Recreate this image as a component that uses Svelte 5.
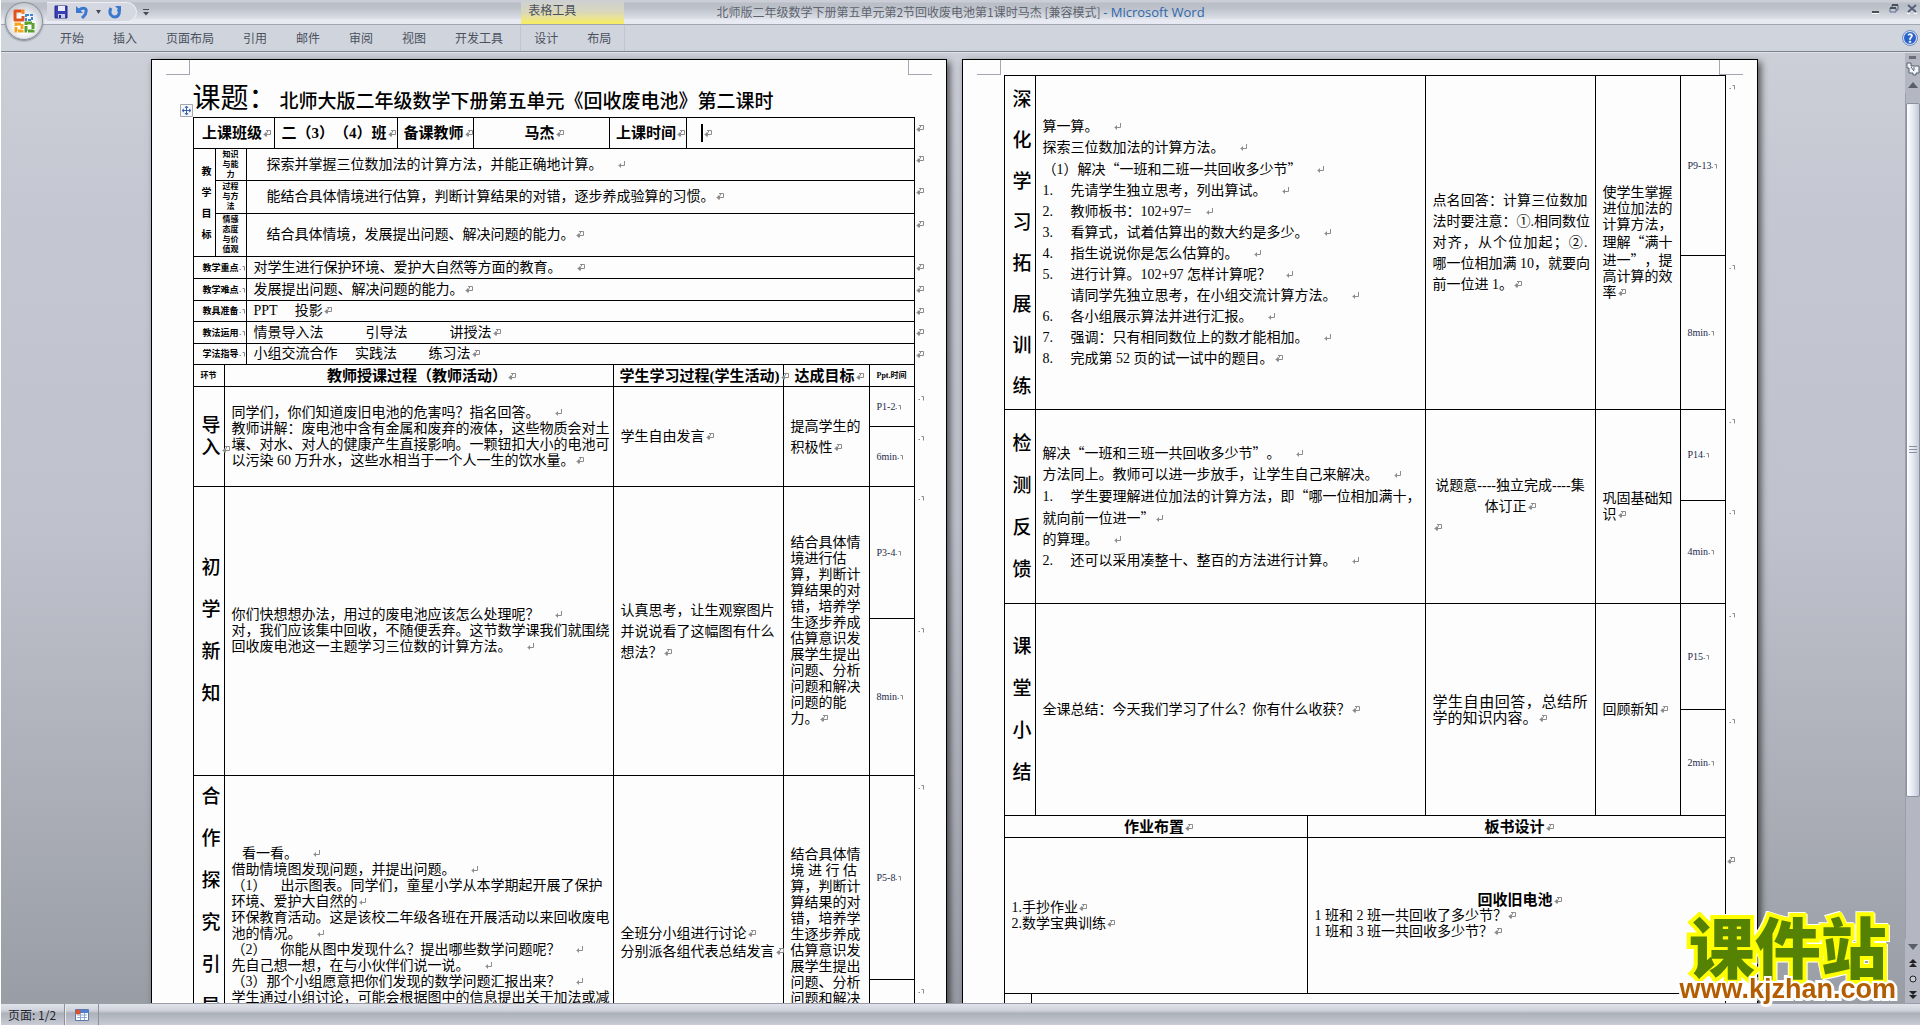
<script>
	const tabs = ['开始', '插入', '页面布局', '引用', '邮件', '审阅', '视图', '开发工具'];
	const tableTabs = ['设计', '布局'];

	// ↵ line break, ¶ paragraph end, ~ small paragraph end
	const goals = [
		{ name: ['知识', '与能', '力'], text: '探索并掌握三位数加法的计算方法，并能正确地计算。　↵', size: 'h32' },
		{ name: ['过程', '与方', '法'], text: '能结合具体情境进行估算，判断计算结果的对错，逐步养成验算的习惯。¶', size: 'h33' },
		{ name: ['情感', '态度', '与价', '值观'], text: '结合具体情境，发展提出问题、解决问题的能力。¶', size: 'h43' }
	];

	const notes = [
		{ name: '教学重点', text: '对学生进行保护环境、爱护大自然等方面的教育。　¶' },
		{ name: '教学难点', text: '发展提出问题、解决问题的能力。¶' },
		{ name: '教具准备', text: 'PPT　 投影¶' },
		{ name: '教法运用', text: '情景导入法　　　引导法　　　讲授法¶' },
		{ name: '学法指导', text: '小组交流合作　 实践法　　 练习法¶' }
	];

	const aims = ['结合具体情', '境进行估', '算，判断计', '算结果的对', '错，培养学', '生逐步养成', '估算意识发', '展学生提出', '问题、分析', '问题和解决', '问题的能', '力。¶'];

	const firstPage = [
		{
			stage: ['导', '入¶'],
			stageKind: 'short',
			teach: [
				'同学们，你们知道废旧电池的危害吗？指名回答。　↵',
				'教师讲解：废电池中含有金属和废弃的液体，这些物质会对土',
				'壤、对水、对人的健康产生直接影响。一颗钮扣大小的电池可',
				'以污染 60 万升水，这些水相当于一个人一生的饮水量。¶'
			],
			learn: ['学生自由发言¶'],
			aim: ['提高学生的', '积极性¶'],
			aimKind: 'loose',
			slides: 'P1-2',
			time: '6min',
			heights: [40, 60]
		},
		{
			stage: ['初', '学', '新', '知'],
			teach: [
				'你们快想想办法，用过的废电池应该怎么处理呢？　↵',
				'对，我们应该集中回收，不随便丢弃。这节数学课我们就围绕',
				'回收废电池这一主题学习三位数的计算方法。　↵'
			],
			learn: ['认真思考，让生观察图片', '并说说看了这幅图有什么', '想法？¶'],
			aim: aims,
			slides: 'P3-4',
			time: '8min',
			heights: [132, 157]
		},
		{
			stage: ['合', '作', '探', '究', '引', '导'],
			stageKind: 'top',
			teach: [
				'   看一看。　↵',
				'借助情境图发现问题，并提出问题。　↵',
				'（1）　出示图表。同学们，童星小学从本学期起开展了保护',
				'环境、爱护大自然的↵',
				'环保教育活动。这是该校二年级各班在开展活动以来回收废电',
				'池的情况。　↵',
				'（2）　你能从图中发现什么？提出哪些数学问题呢？　↵',
				'先自己想一想，在与小伙伴们说一说。　↵',
				'（3）那个小组愿意把你们发现的数学问题汇报出来？　↵',
				'学生通过小组讨论，可能会根据图中的信息提出关于加法或减'
			],
			teachKind: 'lowered',
			learn: ['全班分小组进行讨论¶', '分别派各组代表总结发言¶'],
			learnKind: 'medium',
			aim: [aims[0], '境 进 行 估', ...aims.slice(2)],
			slides: 'P5-8',
			time: '',
			heights: [204, 130]
		}
	];

	const secondPage = [
		{
			stage: ['深', '化', '学', '习', '拓', '展', '训', '练'],
			stageKind: 'long',
			teach: [
				'算一算。　↵',
				'探索三位数加法的计算方法。　↵',
				'（1）解决“一班和二班一共回收多少节”　↵',
				'1.|先请学生独立思考，列出算试。　↵',
				'2.|教师板书：102+97=　↵',
				'3.|看算式，试着估算出的数大约是多少。　↵',
				'4.|指生说说你是怎么估算的。　↵',
				'5.|进行计算。102+97 怎样计算呢？　↵',
				' |请同学先独立思考，在小组交流计算方法。　↵',
				'6.|各小组展示算法并进行汇报。　↵',
				'7.|强调：只有相同数位上的数才能相加。　↵',
				'8.|完成第 52 页的试一试中的题目。¶'
			],
			teachKind: 'loose',
			learn: ['点名回答：计算三位数加', '法时要注意：①.相同数位', '对齐，从个位加起；②.', '哪一位相加满 10，就要向', '前一位进 1。¶'],
			learnKind: 'loose justified',
			aim: ['使学生掌握', '进位加法的', '计算方法，', '理解“满十', '进一”，提', '高计算的效', '率¶'],
			slides: 'P9-13',
			time: '8min',
			heights: [180, 154]
		},
		{
			stage: ['检', '测', '反', '馈'],
			teach: [
				'解决“一班和三班一共回收多少节”。　↵',
				'方法同上。教师可以进一步放手，让学生自己来解决。　↵',
				'1.|学生要理解进位加法的计算方法，即“哪一位相加满十，',
				'就向前一位进一”↵',
				'的算理。　↵',
				'2.|还可以采用凑整十、整百的方法进行计算。　↵'
			],
			teachKind: 'loose',
			learn: ['说题意----独立完成----集', '体订正¶', '¶'],
			learnKind: 'loose centered',
			aim: ['巩固基础知', '识¶'],
			slides: 'P14',
			time: '4min',
			heights: [91, 103]
		},
		{
			stage: ['课', '堂', '小', '结'],
			teach: ['全课总结：今天我们学习了什么？你有什么收获？¶'],
			learn: ['学生自由回答，总结所', '学的知识内容。¶'],
			learnKind: 'large justified',
			aim: ['回顾新知¶'],
			slides: 'P15',
			time: '2min',
			heights: [106, 106]
		}
	];
</script>

{#snippet mark(kind)}<svg class="mark" class:mini={kind === '~'} viewBox="0 0 9 9" aria-hidden="true">{#if kind === '¶'}<path d="M4 1.5h4.500v4H1.500M4.500 3.500v4M3.500 3.500v4M2.500 4.500v2M5.500 1.500v2" />{:else if kind === '↵'}<path d="M7.500 1v4.500H1.500M3.500 3.500v4M2.500 4.500v2" />{:else}<path d="M.5 7.500h1.500M3.500 4.500h2v4" />{/if}</svg>{/snippet}

{#snippet rich(text)}{#each text.split(/([“”↵¶~])/) as part}{#if part === '“' || part === '”'}<span class="quote">{part}</span>{:else if '↵¶~'.includes(part) && part}{@render mark(part)}{:else}{part}{/if}{/each}{/snippet}

{#snippet lines(list)}
	{#each list as line}
		{#if line.includes('|')}
			<p><span class="num">{line.split('|')[0]}</span>{@render rich(line.split('|')[1])}</p>
		{:else}
			<p>{@render rich(line)}</p>
		{/if}
	{/each}
{/snippet}

{#snippet rowEnd(kind)}<span class="row-end">{@render mark(kind)}</span>{/snippet}

{#snippet section(row)}
	<tr style="height: {row.heights[0]}px">
		<th class="stage {row.stageKind ?? ''}" rowspan="2">{@render lines(row.stage)}</th>
		<td class={row.teachKind ?? ''} rowspan="2">{@render lines(row.teach)}</td>
		<td class={row.learnKind ?? 'loose'} rowspan="2">{@render lines(row.learn)}</td>
		<td class={row.aimKind ?? ''} rowspan="2">{@render lines(row.aim)}</td>
		<td class="slide">{row.slides}{@render mark('~')}{@render rowEnd('~')}</td>
	</tr>
	<tr style="height: {row.heights[1]}px">
		<td class="slide">{#if row.time}{row.time}{@render mark('~')}{/if}{@render rowEnd('~')}</td>
	</tr>
{/snippet}

<div class="word">
	<header class="titlebar">
		<div class="quick">
			<button aria-label="保存">
				<svg width="14" height="14" viewBox="0 0 14 14"><path d="M1 1h12v12H1z" fill="#3a3fb4" stroke="#24298a" /><path d="M4 1h7v5H4z" fill="#e8ecfa" /><path d="M4 9h7v4H4z" fill="#c6cbe6" /><path d="M5 10h2v3H5z" fill="#24298a" /></svg>
			</button>
			<button aria-label="撤消">
				<svg width="14" height="14" viewBox="0 0 14 14"><path d="M4 5c4-3 8-2 7 2 0 3-2 4-4 6" fill="none" stroke="#3b78cf" stroke-width="3" /><path d="M1 1v7h7z" fill="#3b78cf" /></svg>
			</button>
			<button class="drop" aria-label="撤消列表">
				<svg width="5" height="4" viewBox="0 0 5 4"><path d="M0 0h5L2.500 4z" fill="#454b58" /></svg>
			</button>
			<button aria-label="重复">
				<svg width="14" height="14" viewBox="0 0 14 14"><path d="M3 3c-3 6 1 9 4 9s6-4 3-8" fill="none" stroke="#3b78cf" stroke-width="3" /><path d="M7 1h6v6z" fill="#3b78cf" /></svg>
			</button>
		</div>
		<button class="custom" aria-label="自定义快速访问工具栏">
			<svg width="6" height="7" viewBox="0 0 6 7"><path d="M0 .5h6" stroke="#454b58" /><path d="M0 3h6L3 6.500z" fill="#454b58" /></svg>
		</button>
		<div class="caption">北师版二年级数学下册第五单元第2节回收废电池第1课时马杰 [兼容模式]  <span>- Microsoft Word</span></div>
		<div class="window">
			<button aria-label="最小化"><svg width="10" height="10" viewBox="0 0 10 10"><path d="M1 8h7" stroke="#4a4e58" stroke-width="2" /><path d="M1 9.500h7" stroke="#fff" /></svg></button>
			<button aria-label="还原"><svg width="10" height="10" viewBox="0 0 10 10"><path d="M3 3V1h6v5H7M1 4h6v4H1z" fill="none" stroke="#5f6f8c" /><path d="M3 1h6M1 4h6" stroke="#4a4e58" stroke-width="2" /></svg></button>
			<button aria-label="关闭"><svg width="10" height="10" viewBox="0 0 10 10"><path d="M1 1l8 7M9 1 1 8" stroke="#566079" stroke-width="2" /><path d="M0 9.500h3M7 9.500h3" stroke="#fff" /></svg></button>
		</div>
	</header>

	<button class="office" aria-label="Office 按钮">
		<svg width="24" height="26" viewBox="0 0 24 26" fill="none">
			<path d="M9 3H3v9h8V8" stroke="#e0541c" stroke-width="3" stroke-linejoin="round" />
			<path d="M9 3h2v3" stroke="#f08a2c" stroke-width="3" />
			<path d="M14 7h6v5h-6z" stroke="#3d86cf" stroke-width="2" stroke-dasharray="3 1" />
			<path d="M4 16h6v7H4z" stroke="#f4a51c" stroke-width="3" stroke-dasharray="5 1" />
			<path d="M14 15h7v8h-7z" stroke="#5aa02c" stroke-width="3" stroke-dasharray="6 1" />
		</svg>
	</button>

	<nav class="ribbon">
		{#each tabs as tab}
			<button>{tab}</button>
		{/each}
		<div class="context">
			<div class="context-label">表格工具</div>
			{#each tableTabs as tab}
				<button>{tab}</button>
			{/each}
		</div>
		<button class="help" aria-label="帮助">?</button>
	</nav>

	<div class="body">
		<main class="workspace">
			<article class="page">
				<i class="corner left"></i><i class="corner right"></i>
				<h1><span>课题：</span>北师大版二年级数学下册第五单元《回收废电池》第二课时</h1>
				<div class="plan">
					<svg class="handle" viewBox="0 0 13 13"><path d="M.5.5h12v12H.5z" fill="#f4f6fa" stroke="#a4a7ae" /><path d="M6.500 2v9M2 6.500h9M5 4l1.500-2L8 4M5 9l1.500 2L8 9M4 5 2 6.500 4 8M9 5l2 1.500L9 8" fill="none" stroke="#3c63b5" /></svg>
					<table>
						<colgroup><col class="w81" /><col class="w123" /><col class="w76" /><col class="w136" /><col class="w77" /><col /></colgroup>
						<tbody>
							<tr class="h31">
								<th>{@render rich('上课班级¶')}</th>
								<th>{@render rich('二（3）（4）班¶')}</th>
								<th>{@render rich('备课教师¶')}</th>
								<th>{@render rich('马杰¶')}</th>
								<th>{@render rich('上课时间¶')}</th>
								<td><div class="entry"><i class="caret"></i>{@render mark('¶')}</div>{@render rowEnd('¶')}</td>
							</tr>
						</tbody>
					</table>
					<table>
						<colgroup><col class="w22" /><col class="w31" /><col /></colgroup>
						<tbody>
							{#each goals as goal, i}
								<tr class={goal.size}>
									{#if i === 0}
										<th class="target" rowspan="3">{@render lines(['教', '学', '目', '标'])}</th>
									{/if}
									<th class="tiny">{@render lines(goal.name)}</th>
									<td class="goal"><p>{@render rich(goal.text)}</p>{@render rowEnd('¶')}</td>
								</tr>
							{/each}
							{#each notes as note, i}
								<tr class={i === 2 || i === 4 ? 'h21' : 'h22'}>
									<th class="note" colspan="2">{note.name}{@render mark('~')}</th>
									<td><p>{@render rich(note.text)}</p>{@render rowEnd('¶')}</td>
								</tr>
							{/each}
						</tbody>
					</table>
					<table>
						<colgroup><col class="w31" /><col /><col class="w170" /><col class="w86" /><col class="w45" /></colgroup>
						<thead>
							<tr class="h22">
								<th class="tiny">环节</th>
								<th>{@render rich('教师授课过程（教师活动）¶')}</th>
								<th>{@render rich('学生学习过程(学生活动)¶')}</th>
								<th>{@render rich('达成目标¶')}</th>
								<th class="tiny">Ppt.时间</th>
							</tr>
						</thead>
						<tbody>
							{#each firstPage as row}
								{@render section(row)}
							{/each}
						</tbody>
					</table>
				</div>
			</article>

			<article class="page second">
				<i class="corner left"></i><i class="corner right"></i>
				<div class="plan">
					<table>
						<colgroup><col class="w31" /><col /><col class="w170" /><col class="w85" /><col class="w45" /></colgroup>
						<tbody>
							{#each secondPage as row}
								{@render section(row)}
							{/each}
						</tbody>
					</table>
					<table>
						<colgroup><col class="w303" /><col /></colgroup>
						<tbody>
							<tr class="h22">
								<th>{@render rich('作业布置¶')}</th>
								<th>{@render rich('板书设计¶')}</th>
							</tr>
							<tr class="h156">
								<td>{@render lines(['1.手抄作业¶', '2.数学宝典训练¶'])}</td>
								<td><h2>{@render rich('回收旧电池¶')}</h2>{@render lines(['1 班和 2 班一共回收了多少节？¶', '1 班和 3 班一共回收多少节？¶'])}<span class="row-end low">{@render mark('¶')}</span></td>
							</tr>
						</tbody>
					</table>
					<table>
						<colgroup><col class="w27" /><col /></colgroup>
						<tbody><tr class="h156"><td></td><td></td></tr></tbody>
					</table>
				</div>
			</article>
		</main>

		<aside class="scroll">
			<div class="split"></div>
			<button aria-label="标尺"><svg width="14" height="14" viewBox="0 0 14 14"><path d="M1 1h4v3h8v7h-3v2H7v-2H3V6H1z" fill="#f2f5fa" stroke="#56606f" /><path d="M5 5l3 4M8 5v3" stroke="#56606f" /></svg></button>
			<button aria-label="向上"><svg width="10" height="6" viewBox="0 0 10 6"><path d="M0 6h10L5 0z" fill="#5a5e69" /></svg></button>
			<div class="track">
				<div class="thumb"><svg width="8" height="8" viewBox="0 0 8 8"><path d="M0 .5h8M0 3.500h8M0 6.500h8" stroke="#8a90a0" /></svg></div>
			</div>
			<button aria-label="向下"><svg width="10" height="6" viewBox="0 0 10 6"><path d="M0 0h10L5 6z" fill="#5a5e69" /></svg></button>
			<button aria-label="前一页"><svg width="8" height="8" viewBox="0 0 8 8"><path d="M0 4h8L4 0zM0 8h8L4 4z" fill="#222" /></svg></button>
			<button aria-label="选择浏览对象"><svg width="8" height="8" viewBox="0 0 8 8"><circle cx="4" cy="4" r="3" fill="#c9ccd4" stroke="#222" /></svg></button>
			<button aria-label="下一页"><svg width="8" height="8" viewBox="0 0 8 8"><path d="M0 0h8L4 4zM0 4h8L4 8z" fill="#222" /></svg></button>
		</aside>
	</div>

	<footer class="status">
		<button class="pages">页面: 1/2</button>
		<button class="macro" aria-label="录制宏">
			<svg width="16" height="14" viewBox="0 0 16 14"><path d="M1.500 1.500h13v11h-13z" fill="#fff" stroke="#5a78b0" /><path d="M2 2h12v3H2z" fill="#4f7fd0" /><path d="M3 7h10M3 9.500h10M6.500 5v7M10.500 5v7" stroke="#8fa8d4" /><circle cx="4" cy="4" r="2.500" fill="#d9532c" /></svg>
		</button>
	</footer>

	<div class="watermark">
		<strong>课件站</strong>
		<span>www.kjzhan.com</span>
	</div>
</div>

<style>
	:global(body) {
		margin: 0;
	}

	.word {
		height: 100vh;
		display: flex;
		flex-direction: column;
		position: relative;
		overflow: hidden;
		box-sizing: border-box;
		border-left: 1px solid #fff;
		font-family: 'Liberation Serif', 'Noto Sans CJK SC', serif;
		font-size: 14px;
		text-spacing-trim: space-all;
		color: #000;
	}

	button {
		padding: 0;
		border: 0;
		background: none;
		font: inherit;
		color: inherit;
	}

	svg {
		display: block;
	}

	p,
	h1,
	h2 {
		margin: 0;
	}

	.titlebar,
	.ribbon,
	.status {
		font-family: 'Noto Sans CJK SC', sans-serif;
		font-size: 12px;
		color: #4b515e;
	}

	.titlebar {
		height: 24px;
		display: flex;
		align-items: center;
		position: relative;
		padding-left: 46px;
		border-bottom: 1px solid #a2a5b2;
		background: linear-gradient(#cbced6 0, #cbced6 2px, #babec7 3px, #bcc0c9 8px, #cdd1d9 14px, #dadde4 18px, #e7eaf3 20px);
	}

	.quick {
		height: 20px;
		display: flex;
		align-items: center;
		gap: 7px;
		padding: 0 14px 0 7px;
		border: 1px solid #eceef3;
		border-left: 0;
		border-radius: 0 10px 10px 0;
		box-sizing: border-box;
		background: #d5d8e0;
	}

	.custom {
		margin-left: 6px;
	}

	.caption {
		position: absolute;
		left: 50%;
		top: 0;
		transform: translateX(-50%);
		line-height: 24px;
		white-space: pre;
		color: #5f646f;
	}

	.caption span {
		font-family: 'Open Sans', sans-serif;
		font-size: 13px;
		color: #2f67ab;
	}

	.window {
		display: flex;
		gap: 8px;
		margin-left: auto;
		padding: 0 3px 7px 0;
	}

	.office {
		position: absolute;
		left: 4px;
		top: 2px;
		z-index: 2;
		width: 38px;
		height: 38px;
		display: flex;
		align-items: center;
		justify-content: center;
		border: 1px solid #8c909a;
		border-radius: 50%;
		background: radial-gradient(circle at 50% 60%, #fff 30%, #d0d3da 65%, #a9adb8);
		box-shadow: 0 1px 2px #7d818b;
	}

	.ribbon {
		height: 26px;
		display: flex;
		align-items: center;
		gap: 29px;
		padding-left: 59px;
		border-bottom: 1px solid #7f838e;
		background: #d0d4dd;
		line-height: 20px;
	}

	.context {
		position: relative;
		height: 26px;
		display: flex;
		align-items: center;
		gap: 29px;
		margin-left: -12px;
		padding: 0 13px;
		border: 1px solid #c2c5d4;
		border-width: 0 1px;
	}

	.context-label {
		position: absolute;
		left: 0;
		right: 0;
		top: -25px;
		height: 24px;
		padding-left: 7px;
		line-height: 20px;
		background: linear-gradient(#cdd0d4, #d9d7bb 50%, #ebe494 75%, #f9ee5c);
	}

	.help {
		width: 14px;
		height: 14px;
		margin-left: auto;
		margin-right: 3px;
		border: 1px solid #dbe6fa;
		border-radius: 50%;
		outline: 1px solid #6f8fc6;
		background: #2b62c9;
		color: #fff;
		font-weight: 700;
		line-height: 12px;
	}

	.body {
		flex: 1;
		min-height: 0;
		display: flex;
		border-top: 1px solid #dfe2e8;
		background: linear-gradient(#cccfd7, #c5c8d2 15%, #bfc2cc 50%, #aaadb6 80%, #999da5);
	}

	.workspace {
		flex: 1;
		min-width: 0;
		display: flex;
		align-items: flex-start;
		justify-content: center;
		gap: 15px;
		padding: 6px 0 0 2px;
		overflow: hidden;
	}

	.page {
		position: relative;
		flex: 0 1 796px;
		box-sizing: border-box;
		min-height: 1123px;
		padding: 0 31px 40px 41px;
		border: 1px solid #000;
		background: #fdfdfd;
		box-shadow: 3px 3px 7px rgba(0, 0, 0, 0.6);
	}

	.second {
		padding-top: 15px;
	}

	.corner {
		position: absolute;
		top: 0;
		width: 23px;
		height: 14px;
		border-bottom: 1px solid #a5a6b2;
	}

	.corner.left {
		left: 14px;
		border-right: 1px solid #a5a6b2;
	}

	.corner.right {
		right: 14px;
		border-left: 1px solid #a5a6b2;
	}

	h1 {
		height: 37px;
		padding-top: 20px;
		display: flex;
		align-items: baseline;
		gap: 3px;
		font-size: 19px;
		font-weight: 500;
		line-height: 37px;
		white-space: nowrap;
	}

	h1 span {
		font-size: 28px;
		font-weight: 400;
	}

	.plan {
		position: relative;
	}

	.handle {
		position: absolute;
		left: -13px;
		top: -13px;
		width: 13px;
		height: 13px;
	}

	table {
		width: 100%;
		table-layout: fixed;
		border-collapse: collapse;
	}

	table + table {
		margin-top: -1px;
	}

	th,
	td {
		position: relative;
		padding: 0;
		border: 1px solid #000;
		line-height: 16px;
		white-space: pre;
	}

	th {
		padding-left: 6px;
		font-size: 15px;
		font-weight: 700;
		text-align: center;
	}

	td {
		padding-left: 7px;
		text-align: left;
	}

	h2 {
		font-size: 15px;
		line-height: 16px;
		text-align: center;
	}

	.mark {
		display: inline-block;
		width: 9px;
		height: 9px;
		fill: none;
		stroke: #8c8c8c;
		stroke-width: 1;
	}

	.mark.mini {
		margin-right: -3px;
	}

	.row-end {
		position: absolute;
		right: -10px;
		top: 5px;
		line-height: 12px;
	}

	.row-end.low {
		top: 17px;
	}

	.quote {
		font-family: 'Noto Sans CJK SC', sans-serif;
	}

	.num {
		display: inline-block;
		width: 28px;
	}

	.entry {
		display: flex;
		align-items: center;
		padding-left: 7px;
	}

	.caret {
		width: 2px;
		height: 18px;
		background: #000;
	}

	.stage {
		padding-left: 8px;
		font-size: 19px;
		font-weight: 500;
		line-height: 42px;
		text-align: left;
	}

	.stage.long {
		line-height: 41px;
	}

	.stage.short {
		line-height: 22px;
	}

	.stage.top {
		vertical-align: top;
	}

	.lowered {
		padding-top: 70px;
		vertical-align: top;
	}

	.loose {
		line-height: 21px;
	}

	.medium {
		line-height: 18px;
	}

	.large {
		font-size: 15px;
	}

	.justified,
	.centered {
		padding-right: 7px;
	}

	.justified p:not(:last-child) {
		text-align-last: justify;
		white-space: nowrap;
	}

	.centered p:not(:last-child) {
		text-align: center;
	}

	.slide {
		font-size: 10px;
		color: #1c2a4a;
	}

	.target {
		padding-left: 8px;
		font-size: 10px;
		line-height: 21px;
		text-align: left;
	}

	.tiny {
		padding-left: 0;
		font-size: 8px;
		line-height: 10px;
	}

	.note {
		padding-left: 9px;
		font-size: 9px;
		text-align: left;
	}

	.goal {
		padding-left: 20px;
	}

	.w22 { width: 22px; }
	.w27 { width: 27px; }
	.w31 { width: 31px; }
	.w45 { width: 45px; }
	.w76 { width: 76px; }
	.w77 { width: 77px; }
	.w81 { width: 81px; }
	.w85 { width: 85px; }
	.w86 { width: 86px; }
	.w123 { width: 123px; }
	.w136 { width: 136px; }
	.w170 { width: 170px; }
	.w303 { width: 303px; }

	.h21 { height: 21px; }
	.h22 { height: 22px; }
	.h31 { height: 31px; }
	.h32 { height: 32px; }
	.h33 { height: 33px; }
	.h43 { height: 43px; }
	.h156 { height: 156px; }

	.scroll {
		width: 15px;
		display: flex;
		flex-direction: column;
		background: #b4b7c1;
	}

	.scroll button {
		height: 16px;
		display: flex;
		align-items: center;
		justify-content: center;
	}

	.split {
		height: 3px;
		margin: 3px 4px 2px;
		background: #6a6d75;
	}

	.track {
		flex: 1;
		padding-top: 10px;
		border-left: 1px solid #9a9eaa;
	}

	.thumb {
		height: 83%;
		display: flex;
		align-items: center;
		justify-content: center;
		box-sizing: border-box;
		border: 1px solid #8c909c;
		border-radius: 2px;
		background: linear-gradient(90deg, #fff, #e4e8f2 50%, #c5cad8);
	}

	.status {
		height: 21px;
		display: flex;
		border-top: 1px solid #9c9da8;
		background: linear-gradient(#e0e3ea, #d0d3db 30%, #adb1ba 45%, #b6bac3 65%, #c9ccd5);
		color: #22252c;
	}

	.pages {
		padding: 0 8px 0 7px;
		border-right: 1px solid #8d919c;
		line-height: 20px;
	}

	.macro {
		padding: 0 8px;
		border-right: 1px solid #8d919c;
		border-left: 1px solid #e6e8ee;
	}

	.watermark {
		position: absolute;
		right: 24px;
		bottom: 24px;
		display: flex;
		flex-direction: column;
		align-items: center;
		font-family: 'Liberation Sans', 'Noto Sans CJK SC', sans-serif;
		font-weight: 700;
		paint-order: stroke fill;
		filter: drop-shadow(1px 1px 0 #fff) drop-shadow(-1px -1px 0 #fff);
	}

	.watermark strong {
		font-size: 66px;
		font-weight: 900;
		line-height: 54px;
		color: #568203;
		-webkit-text-stroke: 8px #ff0;
	}

	.watermark span {
		font-size: 27px;
		line-height: 24px;
		color: #b35c00;
		-webkit-text-stroke: 4px #fff;
	}
</style>
